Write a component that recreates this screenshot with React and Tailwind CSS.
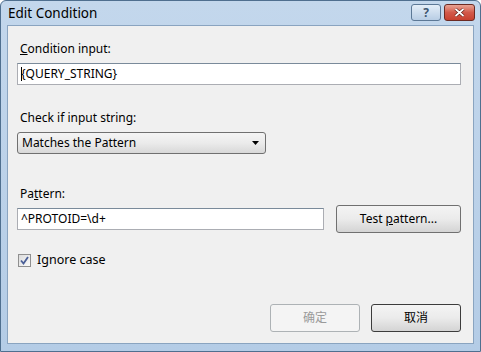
import React from 'react';

const font = { fontFamily: '"Noto Sans", "Noto Sans CJK SC", sans-serif' };

// Win7 style push button
const Button = ({ children, disabled, focused, className = '' }) => (
  <div
    className={
      'h-[28px] w-[90px] rounded-[3px] border flex items-center justify-center text-[12px] ' +
      (disabled
        ? 'border-[#adb2b5] bg-[#f4f4f4] text-[#9a9a9a] '
        : focused
        ? 'border-[#3c3c3c] bg-gradient-to-b from-[#f4f4f4] via-[#ebebeb] to-[#d4d4d4] text-black '
        : 'border-[#707070] bg-gradient-to-b from-[#f4f4f4] via-[#ebebeb] to-[#d4d4d4] text-black ') +
      className
    }
  >
    <span>{children}</span>
  </div>
);

const TextBox = ({ value, className = '', caret }) => (
  <div className={'h-[22px] border border-[#abadb3] border-t-[#7a8a9a] bg-white flex items-center px-[3px] text-[12px] text-black ' + className}>
    {caret && <span className="w-px h-[14px] bg-black -mr-px" />}
    {value}
  </div>
);

export default function App() {
  return (
    <div style={font} className="w-[481px] h-[352px] bg-gradient-to-b from-[#c3d7ec] to-[#b4cce6] border border-[#4f6f8f] rounded-t-[6px] flex flex-col relative overflow-hidden">
      {/* Title bar */}
      <div className="h-[24px] flex items-center justify-between pl-[7px] pr-[5px] shrink-0">
        <span className="text-[13.5px] text-black">Edit Condition</span>
        <div className="flex items-start gap-[3px] self-start mt-[3px]">
          <div className="w-[30px] h-[17px] rounded-[3px] border border-[#5c7896] bg-gradient-to-b from-[#e4eef8] to-[#b8cde4] flex items-center justify-center">
            <span className="text-[12px] font-bold text-[#3d5670] leading-none">?</span>
          </div>
          <div className="w-[31px] h-[17px] rounded-[3px] border border-[#6b2a22] bg-gradient-to-b from-[#e8a393] via-[#d2594a] to-[#c7402f] flex items-center justify-center">
            <svg width="11" height="9" viewBox="0 0 11 9">
              <path d="M1.5 1 L9.5 8 M9.5 1 L1.5 8" stroke="#5a1a12" strokeWidth="3" />
              <path d="M1.5 1 L9.5 8 M9.5 1 L1.5 8" stroke="#ffffff" strokeWidth="1.7" />
            </svg>
          </div>
        </div>
      </div>

      {/* Client area */}
      <div className="flex-1 mx-[6px] mb-[7px] bg-[#f0f0f0] border border-[#8aa4c0] flex flex-col pl-[9px] pr-[12px]">
        <div className="mt-[15px] h-[16px] leading-[16px] text-[12px] text-black pl-[3px]">
          <span className="underline">C</span>ondition input:
        </div>
        <TextBox value="{QUERY_STRING}" caret className="mt-[6px]" />

        <div className="mt-[25px] h-[16px] leading-[16px] text-[12px] text-black pl-[3px]">Check if input string:</div>
        <div className="mt-[6px] w-[249px] h-[22px] rounded-[3px] border border-[#707070] bg-gradient-to-b from-[#f4f4f4] via-[#ebebeb] to-[#d8d8d8] flex items-center justify-between pl-[4px] pr-[6px] text-[12px] text-black">
          <span>Matches the Pattern</span>
          <svg width="7" height="4" viewBox="0 0 7 4">
            <path d="M0 0 H7 L3.5 4 Z" fill="#000" />
          </svg>
        </div>

        <div className="mt-[32px] h-[16px] leading-[16px] text-[12px] text-black pl-[3px]">
          Pa<span className="underline">t</span>tern:
        </div>
        <div className="mt-[3px] flex items-center justify-between">
          <TextBox value="^PROTOID=\d+" className="w-[307px]" />
          <Button className="w-[125px]">
            Test <span className="underline">p</span>attern...
          </Button>
        </div>

        <div className="mt-[18px] flex items-center gap-[6px] pl-[1px]">
          <div className="w-[13px] h-[13px] border border-[#8f8f8f] bg-gradient-to-br from-[#dcdcdc] to-[#fafafa] flex items-center justify-center">
            <svg width="9" height="9" viewBox="0 0 9 9">
              <path d="M1 4.5 L3.5 7.5 L8 1" stroke="#4a5f97" strokeWidth="1.8" fill="none" />
            </svg>
          </div>
          <span className="text-[12.5px] text-black">Ignore case</span>
        </div>

        <div className="mt-auto mb-[11px] flex justify-end gap-[11px]">
          <Button disabled>确定</Button>
          <Button focused>取消</Button>
        </div>
      </div>
    </div>
  );
}
